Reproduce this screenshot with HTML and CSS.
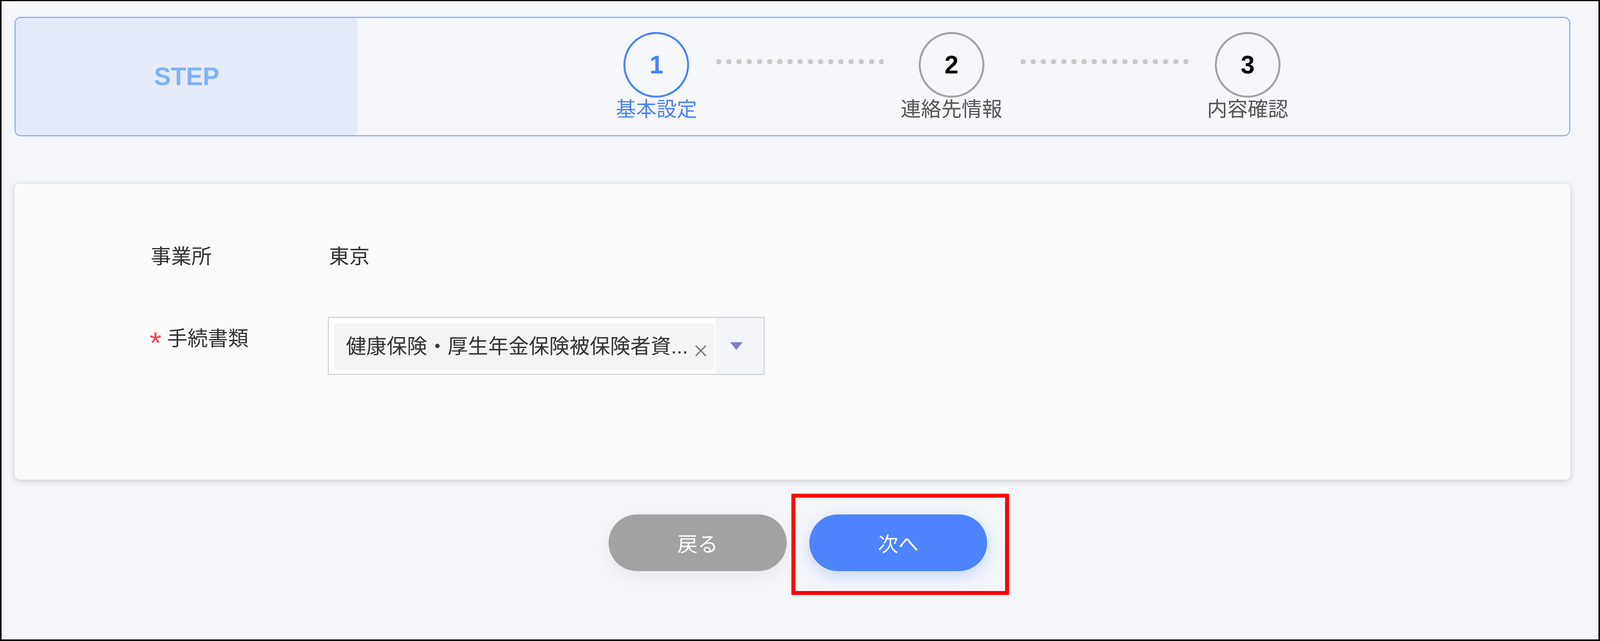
FILE: index.html
```html
<!DOCTYPE html>
<html lang="ja">
<head>
<meta charset="utf-8">
<meta name="viewport" content="width=device-width, initial-scale=1">
<title>手続き - 基本設定</title>
<link rel="stylesheet" href="styles.css">
</head>
<body>
<div class="frame">
  <div class="steps-panel">
    <div class="step-title">STEP</div>
    <div class="steps">
      <div class="step active">
        <div class="circle">1</div>
        <div class="step-label">基本設定</div>
      </div>
      <div class="connector c1"></div>
      <div class="step">
        <div class="circle">2</div>
        <div class="step-label">連絡先情報</div>
      </div>
      <div class="connector c2"></div>
      <div class="step">
        <div class="circle">3</div>
        <div class="step-label">内容確認</div>
      </div>
    </div>
  </div>

  <div class="card">
    <div class="form-row">
      <div class="form-label">事業所</div>
      <div class="form-value">東京</div>
    </div>
    <div class="form-row second">
      <div class="form-label required"><span class="req">*</span>手続書類</div>
      <div class="select">
        <div class="tag-area">
          <div class="tag">
            <span class="tag-text">健康保険・厚生年金保険被保険者資...</span>
            <svg class="tag-close" width="30" height="30" viewBox="0 0 30 30"><path d="M2 2 L28 28 M28 2 L2 28" stroke="#7a7a7a" stroke-width="3.5" fill="none"/></svg>
          </div>
        </div>
        <div class="select-arrow">
          <svg width="32" height="20" viewBox="0 0 32 20"><path d="M0 0 H32 L16 20 Z" fill="#7b85bd"/></svg>
        </div>
      </div>
    </div>
  </div>

  <div class="actions">
    <button class="btn back">戻る</button>
    <div class="next-wrap">
      <button class="btn next">次へ</button>
      <span class="annotation"></span>
    </div>
  </div>
</div>
</body>
</html>
```

FILE: styles.css
```css
/* Horizontal measures are in vw (1vw = 44.08px on the 4408px-wide design),
   vertical measures and type sizes in px. */
html, body {
  margin: 0;
  padding: 0;
  width: 100%;
  height: 100%;
  overflow: hidden;
}

body {
  font-family: "Liberation Sans", "Noto Sans CJK JP", sans-serif;
  color: #333;
}

.frame {
  box-sizing: border-box;
  width: 100%;
  height: 100vh;
  overflow: hidden;
  border: 4px solid #000;
  border-top-width: 3px;
  background: #f5f6fa;
  padding: 40px 1.747vw 0 0.817vw;
}

/* ---------- step panel ---------- */
.steps-panel {
  display: flex;
  box-sizing: border-box;
  height: 306px;
  border: 3px solid #86b4f8;
  border-radius: 16px;
  overflow: hidden;
  background: #f6f7fb;
}

.step-title {
  width: 21.37vw;
  flex: none;
  display: flex;
  align-items: center;
  justify-content: center;
  background: #e5ebf8;
  border-radius: 0 14px 14px 0;
  font-family: "Liberation Sans", sans-serif;
  font-weight: 700;
  font-size: 64px;
  color: #7fb1f6;
}

.steps {
  display: flex;
  align-items: flex-start;
  padding-top: 36px;
  margin-left: 15.721vw;
}

.step {
  width: 5.898vw;
  flex: none;
  display: flex;
  flex-direction: column;
  align-items: center;
}

.circle {
  box-sizing: border-box;
  width: 168px;
  height: 168px;
  flex: none;
  border: 5px solid #a3a3a3;
  border-radius: 50%;
  display: flex;
  align-items: center;
  justify-content: center;
  font-family: "Liberation Sans", sans-serif;
  font-weight: 700;
  font-size: 64px;
  color: #000;
}

.step-label {
  font-size: 52px;
  line-height: 60px;
  color: #555;
  white-space: nowrap;
}

.step.active .circle {
  border-color: #4b82f8;
  color: #4b82f8;
}

.step.active .step-label {
  color: #4b82f8;
}

.connector {
  flex: none;
  width: 10.48vw;
  height: 14px;
  margin-top: 69px;
  background-image: radial-gradient(circle, #c8c8c8 0, #c8c8c8 6px, rgba(200,200,200,0) 7.5px);
  background-size: 0.6366vw 14px;
  background-repeat: repeat-x;
  background-position: calc(7px - 0.3183vw) 0;
}

.connector.c1 {
  margin-left: 0.771vw;
  margin-right: 1.293vw;
}

.connector.c2 {
  margin-left: 1.361vw;
  margin-right: 0.771vw;
}

/* ---------- form card ---------- */
.card {
  box-sizing: border-box;
  height: 758px;
  margin-top: 121px;
  padding: 151px 0 0 8.507vw;
  background: #fafafa;
  border-radius: 14px;
  box-shadow: 0 3px 16px rgba(0, 0, 0, 0.2);
}

.form-row {
  display: flex;
  align-items: flex-start;
}

.form-row.second {
  margin-top: 118px;
}

.form-label {
  width: 11.139vw;
  flex: none;
  font-size: 52px;
  line-height: 72px;
  color: #333;
  white-space: nowrap;
}

.form-row.second .form-label {
  margin-top: 20px;
  margin-left: -3px;
}

.req {
  display: inline-block;
  width: 30px;
  margin-right: 15px;
  font-family: "Liberation Sans", sans-serif;
  font-size: 78px;
  line-height: 0;
  vertical-align: -20px;
  color: #f4464f;
}

.form-value {
  font-size: 52px;
  line-height: 72px;
  color: #333;
}

.select {
  box-sizing: border-box;
  width: 27.314vw;
  height: 149px;
  display: flex;
  border: 3px solid #d6d6d6;
  background: #fff;
}

.tag-area {
  flex: 1;
  min-width: 0;
  padding: 14px 0.091vw 11px 0.318vw;
  display: flex;
}

.tag {
  flex: 1;
  min-width: 0;
  display: flex;
  align-items: center;
  justify-content: space-between;
  padding: 0 0.454vw 0 0.749vw;
  background: #f4f4f4;
  border-radius: 6px;
}

.tag-text {
  font-size: 52px;
  line-height: 60px;
  color: #333;
  white-space: nowrap;
}

.tag-close {
  flex: none;
  margin-top: 22px;
}

.select-arrow {
  width: 3.017vw;
  flex: none;
  box-sizing: border-box;
  display: flex;
  align-items: center;
  padding-left: 0.93vw;
  background: #f3f5fb;
}

/* ---------- actions ---------- */
.actions {
  display: flex;
  justify-content: center;
  gap: 1.429vw;
  margin-top: 89px;
  padding-left: 0.68vw;
}

.btn {
  width: 11.116vw;
  height: 145px;
  border: none;
  border-radius: 73px;
  font-family: "Liberation Sans", "Noto Sans CJK JP", sans-serif;
  font-size: 52px;
  color: #fff;
  padding: 0;
}

.btn.back {
  background: #a2a2a2;
  box-shadow: 0 14px 40px rgba(0, 0, 0, 0.06);
}

.btn.next {
  background: #4d84fd;
  box-shadow: 0 12px 40px rgba(77, 132, 253, 0.28);
}

.next-wrap {
  position: relative;
}

.annotation {
  position: absolute;
  left: -1.134vw;
  top: -53px;
  right: -1.361vw;
  bottom: -61px;
  border: 10px solid #ff0000;
  pointer-events: none;
}
```
